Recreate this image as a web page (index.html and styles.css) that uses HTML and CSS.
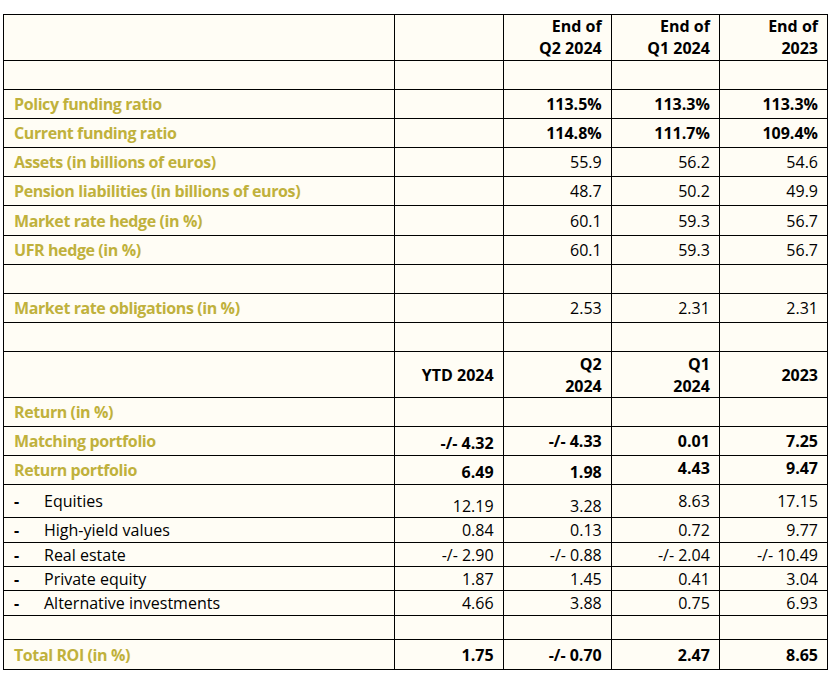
FILE: index.html
```html
<!DOCTYPE html>
<html lang="en">
<head>
<meta charset="utf-8">
<title>Funding ratio and returns</title>
<link rel="stylesheet" href="styles.css">
</head>
<body>
<table class="report">
  <colgroup>
    <col class="c-label">
    <col class="c-num">
    <col class="c-num">
    <col class="c-num">
    <col class="c-num">
  </colgroup>
  <tbody>
    <tr class="h46">
      <td></td><td></td>
      <td class="num strong top">End of<br>Q2 2024</td>
      <td class="num strong top">End of<br>Q1 2024</td>
      <td class="num strong top">End of<br>2023</td>
    </tr>
    <tr class="h29"><td></td><td></td><td></td><td></td><td></td></tr>
    <tr class="h29">
      <td class="label">Policy funding ratio</td><td></td>
      <td class="num strong">113.5%</td><td class="num strong">113.3%</td><td class="num strong">113.3%</td>
    </tr>
    <tr class="h29">
      <td class="label">Current funding ratio</td><td></td>
      <td class="num strong">114.8%</td><td class="num strong">111.7%</td><td class="num strong">109.4%</td>
    </tr>
    <tr class="h29">
      <td class="label">Assets (in billions of euros)</td><td></td>
      <td class="num">55.9</td><td class="num">56.2</td><td class="num">54.6</td>
    </tr>
    <tr class="h29">
      <td class="label">Pension liabilities (in billions of euros)</td><td></td>
      <td class="num">48.7</td><td class="num">50.2</td><td class="num">49.9</td>
    </tr>
    <tr class="h30">
      <td class="label">Market rate hedge (in %)</td><td></td>
      <td class="num">60.1</td><td class="num">59.3</td><td class="num">56.7</td>
    </tr>
    <tr class="h29">
      <td class="label">UFR hedge (in %)</td><td></td>
      <td class="num">60.1</td><td class="num">59.3</td><td class="num">56.7</td>
    </tr>
    <tr class="h29"><td></td><td></td><td></td><td></td><td></td></tr>
    <tr class="h29">
      <td class="label">Market rate obligations (in %)</td><td></td>
      <td class="num">2.53</td><td class="num">2.31</td><td class="num">2.31</td>
    </tr>
    <tr class="h29"><td></td><td></td><td></td><td></td><td></td></tr>
    <tr class="h46">
      <td></td>
      <td class="num strong">YTD 2024</td>
      <td class="num strong">Q2<br>2024</td>
      <td class="num strong">Q1<br>2024</td>
      <td class="num strong">2023</td>
    </tr>
    <tr class="h29">
      <td class="label">Return (in %)</td><td></td><td></td><td></td><td></td>
    </tr>
    <tr class="h29">
      <td class="label">Matching portfolio</td>
      <td class="num strong low">-/- 4.32</td><td class="num strong">-/- 4.33</td><td class="num strong">0.01</td><td class="num strong">7.25</td>
    </tr>
    <tr class="h29">
      <td class="label">Return portfolio</td>
      <td class="num strong low">6.49</td><td class="num strong low">1.98</td><td class="num strong high">4.43</td><td class="num strong high">9.47</td>
    </tr>
    <tr class="h33">
      <td class="sub"><span class="dash">-</span>Equities</td>
      <td class="num bottom">12.19</td><td class="num bottom">3.28</td><td class="num">8.63</td><td class="num">17.15</td>
    </tr>
    <tr class="h25">
      <td class="sub"><span class="dash">-</span>High-yield values</td>
      <td class="num">0.84</td><td class="num">0.13</td><td class="num">0.72</td><td class="num">9.77</td>
    </tr>
    <tr class="h24">
      <td class="sub"><span class="dash">-</span>Real estate</td>
      <td class="num">-/- 2.90</td><td class="num">-/- 0.88</td><td class="num">-/- 2.04</td><td class="num">-/- 10.49</td>
    </tr>
    <tr class="h24">
      <td class="sub"><span class="dash">-</span>Private equity</td>
      <td class="num">1.87</td><td class="num">1.45</td><td class="num">0.41</td><td class="num">3.04</td>
    </tr>
    <tr class="h25">
      <td class="sub"><span class="dash">-</span>Alternative investments</td>
      <td class="num">4.66</td><td class="num">3.88</td><td class="num">0.75</td><td class="num">6.93</td>
    </tr>
    <tr class="h24"><td></td><td></td><td></td><td></td><td></td></tr>
    <tr class="h30">
      <td class="label">Total ROI (in %)</td>
      <td class="num strong">1.75</td><td class="num strong">-/- 0.70</td><td class="num strong">2.47</td><td class="num strong">8.65</td>
    </tr>
  </tbody>
</table>
</body>
</html>
```

FILE: styles.css
```css
html, body {
  margin: 0;
  padding: 0;
  background: #ffffff;
}

body {
  padding: 14px 0 0 3px;
  font-family: "Open Sans", "Liberation Sans", sans-serif;
  font-size: 16px;
  color: #000000;
}

.report {
  border-collapse: collapse;
  table-layout: fixed;
  width: 825px;
  background: #fffdf5;
}

.c-label { width: 391px; }
.c-num { width: 108px; }

.report td {
  border: 1px solid #000000;
  padding: 0 9px 0 10px;
  vertical-align: middle;
  line-height: 22px;
  white-space: nowrap;
  overflow: hidden;
}

.h46 td { height: 45px; }
.h33 td { height: 32px; }
.h30 td { height: 29px; }
.h29 td { height: 28px; }
.h25 td { height: 24px; }
.h24 td { height: 23px; }

.label {
  font-weight: 700;
  color: #c0b13c;
  letter-spacing: -0.4px;
}

.num {
  text-align: right;
}

.strong {
  font-weight: 700;
}

.report td.top {
  vertical-align: top;
}

.report td.bottom {
  vertical-align: bottom;
}

.h29 td.low {
  vertical-align: bottom;
  padding-bottom: 1px;
  height: 27px;
}

.h29 td.high {
  vertical-align: top;
  padding-top: 1px;
  height: 27px;
}

.sub {
  color: #000000;
}

.dash {
  display: inline-block;
  width: 30px;
  font-weight: 700;
}
```
